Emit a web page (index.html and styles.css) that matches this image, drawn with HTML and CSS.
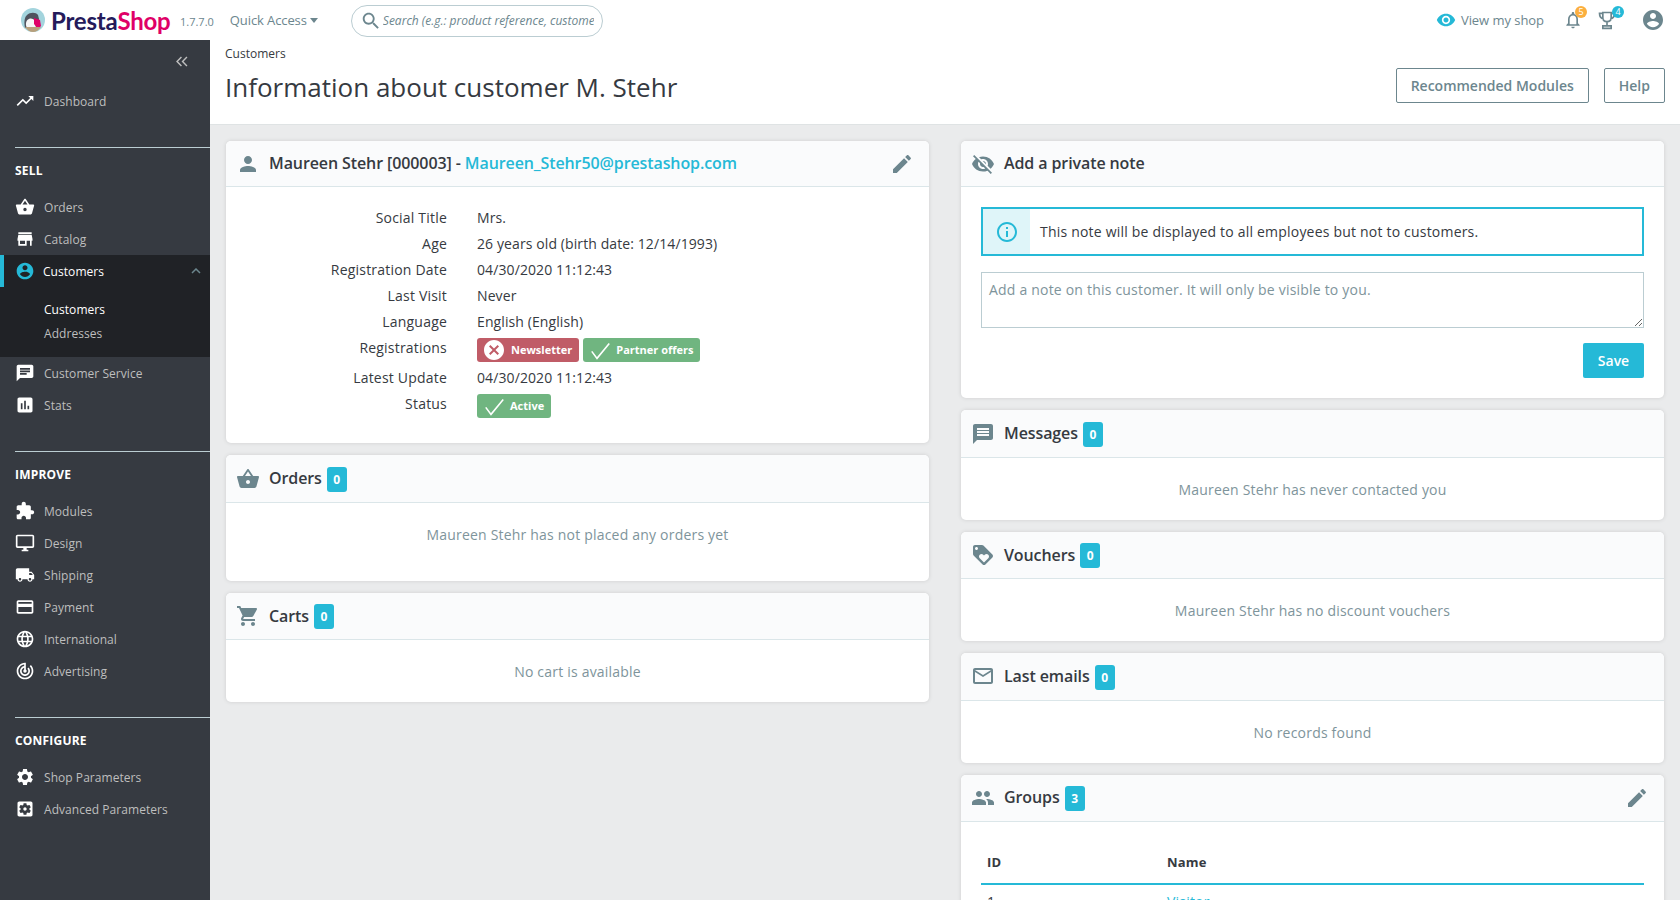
FILE: index.html
```html
<!DOCTYPE html>
<html lang="en">
<head>
    <meta charset="UTF-8">
    <title>Information about customer M. Stehr</title>
    <link rel="stylesheet" href="styles.css">
</head>
<body>
    <svg class="sprite" xmlns="http://www.w3.org/2000/svg">
        <symbol id="i-trending" viewBox="0 0 24 24"><path d="M16 6l2.29 2.29-4.88 4.88-4-4L2 16.59 3.41 18l6-6 4 4 6.3-6.29L22 12V6z"/></symbol>
        <symbol id="i-basket" viewBox="0 0 24 24"><path d="M17.21 9l-4.38-6.56c-.19-.28-.51-.42-.83-.42-.32 0-.64.14-.83.43L6.79 9H2c-.55 0-1 .45-1 1 0 .09.01.18.04.27l2.54 9.27c.23.84 1 1.46 1.92 1.46h13c.92 0 1.69-.62 1.93-1.46l2.54-9.27L23 10c0-.55-.45-1-1-1h-4.79zM9 9l3-4.4L15 9H9zm3 8c-1.1 0-2-.9-2-2s.9-2 2-2 2 .9 2 2-.9 2-2 2z"/></symbol>
        <symbol id="i-store" viewBox="0 0 24 24"><path d="M20 4H4v2h16V4zm1 10v-2l-1-5H4l-1 5v2h1v6h10v-6h4v6h2v-6h1zm-9 4H6v-4h6v4z"/></symbol>
        <symbol id="i-account" viewBox="0 0 24 24"><path d="M12 2C6.48 2 2 6.48 2 12s4.48 10 10 10 10-4.48 10-10S17.52 2 12 2zm0 3c1.66 0 3 1.34 3 3s-1.34 3-3 3-3-1.34-3-3 1.34-3 3-3zm0 14.2c-2.5 0-4.71-1.28-6-3.22.03-1.99 4-3.08 6-3.08 1.99 0 5.97 1.09 6 3.08-1.29 1.94-3.5 3.22-6 3.22z"/></symbol>
        <symbol id="i-chat" viewBox="0 0 24 24"><path d="M20 2H4c-1.1 0-1.99.9-1.99 2L2 22l4-4h14c1.1 0 2-.9 2-2V4c0-1.1-.9-2-2-2zM6 9h12v2H6V9zm8 5H6v-2h8v2zm4-6H6V6h12v2z"/></symbol>
        <symbol id="i-stats" viewBox="0 0 24 24"><path d="M19 3H5c-1.1 0-2 .9-2 2v14c0 1.1.9 2 2 2h14c1.1 0 2-.9 2-2V5c0-1.1-.9-2-2-2zM9 17H7v-7h2v7zm4 0h-2V7h2v10zm4 0h-2v-4h2v4z"/></symbol>
        <symbol id="i-extension" viewBox="0 0 24 24"><path d="M20.5 11H19V7c0-1.1-.9-2-2-2h-4V3.5C13 2.12 11.88 1 10.5 1S8 2.12 8 3.5V5H4c-1.1 0-1.99.9-1.99 2v3.8H3.5c1.49 0 2.7 1.21 2.7 2.7s-1.21 2.7-2.7 2.7H2V20c0 1.1.9 2 2 2h3.8v-1.5c0-1.49 1.21-2.7 2.7-2.7 1.49 0 2.7 1.21 2.7 2.7V22H17c1.1 0 2-.9 2-2v-4h1.5c1.38 0 2.5-1.12 2.5-2.5S21.88 11 20.5 11z"/></symbol>
        <symbol id="i-desktop" viewBox="0 0 24 24"><path d="M21 2H3c-1.1 0-2 .9-2 2v12c0 1.1.9 2 2 2h7v2H8v2h8v-2h-2v-2h7c1.1 0 2-.9 2-2V4c0-1.1-.9-2-2-2zm0 14H3V4h18v12z"/></symbol>
        <symbol id="i-shipping" viewBox="0 0 24 24"><path d="M20 8h-3V4H3c-1.1 0-2 .9-2 2v11h2c0 1.66 1.34 3 3 3s3-1.34 3-3h6c0 1.66 1.34 3 3 3s3-1.34 3-3h2v-5l-3-4zM6 18.5c-.83 0-1.5-.67-1.5-1.5s.67-1.5 1.5-1.5 1.5.67 1.5 1.5-.67 1.5-1.5 1.5zm13.5-9l1.96 2.5H17V9.5h2.5zm-1.5 9c-.83 0-1.5-.67-1.5-1.5s.67-1.5 1.5-1.5 1.5.67 1.5 1.5-.67 1.5-1.5 1.5z"/></symbol>
        <symbol id="i-payment" viewBox="0 0 24 24"><path d="M20 4H4c-1.11 0-1.99.89-1.99 2L2 18c0 1.11.89 2 2 2h16c1.11 0 2-.89 2-2V6c0-1.11-.89-2-2-2zm0 14H4v-6h16v6zm0-10H4V6h16v2z"/></symbol>
        <symbol id="i-language" viewBox="0 0 24 24"><path d="M11.99 2C6.47 2 2 6.48 2 12s4.47 10 9.99 10C17.52 22 22 17.52 22 12S17.52 2 11.99 2zm6.93 6h-2.95c-.32-1.25-.78-2.45-1.38-3.56 1.84.63 3.37 1.91 4.33 3.56zM12 4.04c.83 1.2 1.48 2.53 1.91 3.96h-3.82c.43-1.43 1.08-2.76 1.91-3.96zM4.26 14C4.1 13.36 4 12.69 4 12s.1-1.36.26-2h3.38c-.08.66-.14 1.32-.14 2 0 .68.06 1.34.14 2H4.26zm.82 2h2.95c.32 1.25.78 2.45 1.38 3.56-1.84-.63-3.37-1.9-4.33-3.56zm2.95-8H5.08c.96-1.66 2.49-2.93 4.33-3.56C8.81 5.55 8.35 6.75 8.03 8zM12 19.96c-.83-1.2-1.48-2.53-1.91-3.96h3.82c-.43 1.43-1.08 2.76-1.91 3.96zM14.34 14H9.66c-.09-.66-.16-1.32-.16-2 0-.68.07-1.35.16-2h4.68c.09.65.16 1.32.16 2 0 .68-.07 1.34-.16 2zm.25 5.56c.6-1.11 1.06-2.31 1.38-3.56h2.95c-.96 1.65-2.49 2.93-4.33 3.56zM16.36 14c.08-.66.14-1.32.14-2 0-.68-.06-1.34-.14-2h3.38c.16.64.26 1.31.26 2s-.1 1.36-.26 2h-3.38z"/></symbol>
        <symbol id="i-target" viewBox="0 0 24 24"><path d="M19.07 4.93l-1.41 1.41C19.1 7.79 20 9.79 20 12c0 4.42-3.58 8-8 8s-8-3.58-8-8c0-4.08 3.05-7.44 7-7.93v2.02C8.16 6.57 6 9.03 6 12c0 3.31 2.69 6 6 6s6-2.69 6-6c0-1.66-.67-3.16-1.76-4.24l-1.41 1.41C15.55 9.9 16 10.9 16 12c0 2.21-1.79 4-4 4s-4-1.79-4-4c0-1.86 1.28-3.41 3-3.86v2.14c-.6.35-1 .98-1 1.72 0 1.1.9 2 2 2s2-.9 2-2c0-.74-.4-1.38-1-1.72V2h-1C6.48 2 2 6.48 2 12s4.48 10 10 10 10-4.48 10-10c0-2.76-1.12-5.26-2.93-7.07z"/></symbol>
        <symbol id="i-settings" viewBox="0 0 24 24"><path d="M19.14 12.94c.04-.3.06-.61.06-.94 0-.32-.02-.64-.07-.94l2.03-1.58c.18-.14.23-.41.12-.61l-1.92-3.32c-.12-.22-.37-.29-.59-.22l-2.39.96c-.5-.38-1.03-.7-1.62-.94l-.36-2.54c-.04-.24-.24-.41-.48-.41h-3.84c-.24 0-.43.17-.47.41l-.36 2.54c-.59.24-1.13.57-1.62.94l-2.39-.96c-.22-.08-.47 0-.59.22L2.74 8.87c-.12.21-.08.47.12.61l2.03 1.58c-.05.3-.09.63-.09.94s.02.64.07.94l-2.03 1.58c-.18.14-.23.41-.12.61l1.92 3.32c.12.22.37.29.59.22l2.39-.96c.5.38 1.03.7 1.62.94l.36 2.54c.05.24.24.41.48.41h3.84c.24 0 .44-.17.47-.41l.36-2.54c.59-.24 1.13-.56 1.62-.94l2.39.96c.22.08.47 0 .59-.22l1.92-3.32c.12-.22.07-.47-.12-.61l-2.01-1.58zM12 15.6c-1.98 0-3.6-1.62-3.6-3.6s1.62-3.6 3.6-3.6 3.6 1.62 3.6 3.6-1.62 3.6-3.6 3.6z"/></symbol>
        <symbol id="i-settings-box" viewBox="0 0 24 24"><path d="M12 10c-1.1 0-2 .9-2 2s.9 2 2 2 2-.9 2-2-.9-2-2-2zm7-7H5c-1.11 0-2 .9-2 2v14c0 1.1.89 2 2 2h14c1.11 0 2-.9 2-2V5c0-1.1-.89-2-2-2zm-1.75 9c0 .23-.02.46-.05.68l1.48 1.16c.13.11.17.3.08.45l-1.4 2.42c-.09.15-.27.21-.43.15l-1.74-.7c-.36.28-.76.51-1.18.69l-.26 1.85c-.03.17-.18.3-.35.3h-2.8c-.17 0-.32-.13-.35-.29l-.26-1.85c-.43-.18-.82-.41-1.18-.69l-1.74.7c-.16.06-.34 0-.43-.15l-1.4-2.42c-.09-.15-.05-.34.08-.45l1.48-1.16c-.03-.23-.05-.46-.05-.69 0-.23.02-.46.05-.68l-1.48-1.16c-.13-.11-.17-.3-.08-.45l1.4-2.42c.09-.15.27-.21.43-.15l1.74.7c.36-.28.76-.51 1.18-.69l.26-1.85c.03-.17.18-.3.35-.3h2.8c.17 0 .32.13.35.29l.26 1.85c.43.18.82.41 1.18.69l1.74-.7c.16-.06.34 0 .43.15l1.4 2.42c.09.15.05.34-.08.45l-1.48 1.16c.03.23.05.46.05.69z"/></symbol>
        <symbol id="i-person" viewBox="0 0 24 24"><path d="M12 12c2.21 0 4-1.79 4-4s-1.79-4-4-4-4 1.79-4 4 1.79 4 4 4zm0 2c-2.67 0-8 1.34-8 4v2h16v-2c0-2.66-5.33-4-8-4z"/></symbol>
        <symbol id="i-edit" viewBox="0 0 24 24"><path d="M3 17.25V21h3.75L17.81 9.94l-3.75-3.75L3 17.25zM20.71 7.04c.39-.39.39-1.02 0-1.41l-2.34-2.34c-.39-.39-1.02-.39-1.41 0l-1.83 1.83 3.75 3.75 1.83-1.83z"/></symbol>
        <symbol id="i-eye" viewBox="0 0 24 24"><path d="M12 4.5C7 4.5 2.73 7.61 1 12c1.73 4.39 6 7.5 11 7.5s9.27-3.11 11-7.5c-1.73-4.39-6-7.5-11-7.5zM12 17c-2.76 0-5-2.24-5-5s2.24-5 5-5 5 2.24 5 5-2.24 5-5 5zm0-8c-1.66 0-3 1.34-3 3s1.34 3 3 3 3-1.34 3-3-1.34-3-3-3z"/></symbol>
        <symbol id="i-eye-off" viewBox="0 0 24 24"><path d="M12 7c2.76 0 5 2.24 5 5 0 .65-.13 1.26-.36 1.83l2.92 2.92c1.51-1.26 2.7-2.89 3.43-4.75-1.73-4.39-6-7.5-11-7.5-1.4 0-2.74.25-3.98.7l2.16 2.16C10.74 7.13 11.35 7 12 7zM2 4.27l2.28 2.28.46.46C3.08 8.3 1.78 10.02 1 12c1.73 4.39 6 7.5 11 7.5 1.55 0 3.03-.3 4.38-.84l.42.42L19.73 22 21 20.73 3.27 3 2 4.27zM7.53 9.8l1.55 1.55c-.05.21-.08.43-.08.65 0 1.66 1.34 3 3 3 .22 0 .44-.03.65-.08l1.55 1.55c-.67.33-1.41.53-2.2.53-2.76 0-5-2.24-5-5 0-.79.2-1.53.53-2.2zm4.31-.78l3.15 3.15.02-.16c0-1.66-1.34-3-3-3l-.17.01z"/></symbol>
        <symbol id="i-message" viewBox="0 0 24 24"><path d="M20 2H4c-1.1 0-1.99.9-1.99 2L2 22l4-4h14c1.1 0 2-.9 2-2V4c0-1.1-.9-2-2-2zm-2 12H6v-2h12v2zm0-3H6V9h12v2zm0-3H6V6h12v2z"/></symbol>
        <symbol id="i-loyalty" viewBox="0 0 24 24"><path d="M21.41 11.58l-9-9C12.05 2.22 11.55 2 11 2H4c-1.1 0-2 .9-2 2v7c0 .55.22 1.05.59 1.42l9 9c.36.36.86.58 1.41.58.55 0 1.05-.22 1.41-.59l7-7c.37-.36.59-.86.59-1.41 0-.55-.23-1.06-.59-1.42zM5.5 7C4.67 7 4 6.33 4 5.5S4.67 4 5.5 4 7 4.67 7 5.5 6.33 7 5.5 7zm11.77 8.27L13 19.54l-4.27-4.27C8.28 14.81 8 14.19 8 13.5c0-1.38 1.12-2.5 2.5-2.5.69 0 1.32.28 1.77.74l.73.72.73-.73c.45-.45 1.08-.73 1.77-.73 1.38 0 2.5 1.12 2.5 2.5 0 .69-.28 1.32-.73 1.77z"/></symbol>
        <symbol id="i-mail" viewBox="0 0 24 24"><path d="M20 4H4c-1.1 0-1.99.9-1.99 2L2 18c0 1.1.9 2 2 2h16c1.1 0 2-.9 2-2V6c0-1.1-.9-2-2-2zm0 14H4V8l8 5 8-5v10zm-8-7L4 6h16l-8 5z"/></symbol>
        <symbol id="i-group" viewBox="0 0 24 24"><path d="M16 11c1.66 0 2.99-1.34 2.99-3S17.66 5 16 5c-1.66 0-3 1.34-3 3s1.34 3 3 3zm-8 0c1.66 0 2.99-1.34 2.99-3S9.66 5 8 5C6.34 5 5 6.34 5 8s1.34 3 3 3zm0 2c-2.33 0-7 1.17-7 3.5V19h14v-2.5c0-2.33-4.67-3.5-7-3.5zm8 0c-.29 0-.62.02-.97.05 1.16.84 1.97 1.97 1.97 3.45V19h6v-2.5c0-2.33-4.67-3.5-7-3.5z"/></symbol>
        <symbol id="i-cart" viewBox="0 0 24 24"><path d="M7 18c-1.1 0-1.99.9-1.99 2S5.9 22 7 22s2-.9 2-2-.9-2-2-2zM1 2v2h2l3.6 7.59-1.35 2.45c-.16.28-.25.61-.25.96 0 1.1.9 2 2 2h12v-2H7.42c-.14 0-.25-.11-.25-.25l.03-.12.9-1.63h7.45c.75 0 1.41-.41 1.75-1.03l3.58-6.49c.08-.14.12-.31.12-.48 0-.55-.45-1-1-1H5.21l-.94-2H1zm16 16c-1.1 0-1.99.9-1.99 2s.89 2 1.99 2 2-.9 2-2-.9-2-2-2z"/></symbol>
        <symbol id="i-search" viewBox="0 0 24 24"><path d="M15.5 14h-.79l-.28-.27C15.41 12.59 16 11.11 16 9.5 16 5.91 13.09 3 9.5 3S3 5.91 3 9.5 5.91 16 9.5 16c1.61 0 3.09-.59 4.23-1.57l.27.28v.79l5 4.99L20.49 19l-4.99-5zm-6 0C7.01 14 5 11.99 5 9.5S7.01 5 9.5 5 14 7.01 14 9.5 11.99 14 9.5 14z"/></symbol>
        <symbol id="i-bell" viewBox="0 0 24 24"><path d="M12 22c1.1 0 2-.9 2-2h-4c0 1.1.9 2 2 2zm6-6v-5c0-3.07-1.63-5.64-4.5-6.32V4c0-.83-.67-1.5-1.5-1.5s-1.5.67-1.5 1.5v.68C7.64 5.36 6 7.92 6 11v5l-2 2v1h16v-1l-2-2zm-2 1H8v-6c0-2.48 1.51-4.5 4-4.5s4 2.02 4 4.5v6z"/></symbol>
        <symbol id="i-info" viewBox="0 0 24 24"><path d="M11 17h2v-6h-2v6zm1-15C6.48 2 2 6.48 2 12s4.48 10 10 10 10-4.48 10-10S17.52 2 12 2zm0 18c-4.41 0-8-3.59-8-8s3.59-8 8-8 8 3.59 8 8-3.59 8-8 8zM11 9h2V7h-2v2z"/></symbol>
        <symbol id="i-cancel" viewBox="0 0 24 24"><path d="M12 2C6.47 2 2 6.47 2 12s4.47 10 10 10 10-4.47 10-10S17.53 2 12 2zm5 13.59L15.59 17 12 13.41 8.41 17 7 15.59 10.59 12 7 8.41 8.41 7 12 10.59 15.59 7 17 8.41 13.41 12 17 15.59z"/></symbol>
        <symbol id="i-check" viewBox="0 0 24 24"><path d="M2 13l6 8L22 4" fill="none" stroke="currentColor" stroke-width="1.800"/></symbol>
        <symbol id="i-trophy" viewBox="0 0 24 24"><path d="M7 3h10v6c0 3-2 5-5 5s-5-2-5-5zM7 4H3c0 3 1 6 5 7M17 4h4c0 3-1 6-5 7M12 14v5M7 22v-3h10v3z" fill="none" stroke="currentColor" stroke-width="2"/></symbol>
    </svg>

    <header class="topbar">
        <a class="logo" href="#">
            <svg class="logo-bird" viewBox="0 0 24 24">
                <circle cx="12" cy="12" r="12" fill="#a3d4dd"/>
                <path d="M4 20c-1-5-1-10 2-13 3-3 9-3 11 0l1 4-2 9z" fill="#4f535e"/>
                <path d="M6 20c-2-4-1-8 2-9 2-1 5 0 6 2l1 7z" fill="#f6f6f6"/>
                <path d="M13 10l6 2 1 6-3 3-4-5z" fill="#df0067"/>
                <path d="M4 19h16c-2 3-5 5-8 5s-6-2-8-5z" fill="#b8a07c"/>
            </svg>
            <span class="logo-name">Presta<em>Shop</em></span>
        </a>
        <span class="version">1.7.7.0</span>
        <a class="quick-access" href="#">Quick Access <i class="caret"></i></a>
        <form class="search">
            <svg class="icon search-icon"><use href="#i-search"/></svg>
            <input type="text" placeholder="Search (e.g.: product reference, customer name…)">
        </form>
        <div class="topbar-right">
            <a class="view-shop" href="#"><svg class="icon"><use href="#i-eye"/></svg>View my shop</a>
            <a class="notif" href="#"><svg class="icon"><use href="#i-bell"/></svg><span class="notif-count orange">5</span></a>
            <a class="notif" href="#"><svg class="icon"><use href="#i-trophy"/></svg><span class="notif-count blue">4</span></a>
            <a class="avatar" href="#"><svg class="icon"><use href="#i-account"/></svg></a>
        </div>
    </header>

    <div class="layout">
        <nav class="sidebar">
            <div class="collapse-row">
                <svg class="collapse-icon" viewBox="0 0 12 10"><path d="M5.500 1L1.500 5l4 4M10.500 1l-4 4 4 4" fill="none" stroke="currentColor" stroke-width="1.300"/></svg>
            </div>
            <a class="nav-link" href="#"><svg class="icon"><use href="#i-trending"/></svg>Dashboard</a>

            <div class="nav-section">
                <h2>Sell</h2>
                <a class="nav-link" href="#"><svg class="icon"><use href="#i-basket"/></svg>Orders</a>
                <a class="nav-link" href="#"><svg class="icon"><use href="#i-store"/></svg>Catalog</a>
                <div class="nav-open">
                    <a class="nav-link active" href="#"><svg class="icon"><use href="#i-account"/></svg>Customers<svg class="chevron" viewBox="0 0 10 6"><path d="M1 5l4-4 4 4" fill="none" stroke="currentColor" stroke-width="1.500"/></svg></a>
                    <ul class="subnav">
                        <li class="current">Customers</li>
                        <li>Addresses</li>
                    </ul>
                </div>
                <a class="nav-link" href="#"><svg class="icon"><use href="#i-chat"/></svg>Customer Service</a>
                <a class="nav-link" href="#"><svg class="icon"><use href="#i-stats"/></svg>Stats</a>
            </div>

            <div class="nav-section">
                <h2>Improve</h2>
                <a class="nav-link" href="#"><svg class="icon"><use href="#i-extension"/></svg>Modules</a>
                <a class="nav-link" href="#"><svg class="icon"><use href="#i-desktop"/></svg>Design</a>
                <a class="nav-link" href="#"><svg class="icon"><use href="#i-shipping"/></svg>Shipping</a>
                <a class="nav-link" href="#"><svg class="icon"><use href="#i-payment"/></svg>Payment</a>
                <a class="nav-link" href="#"><svg class="icon"><use href="#i-language"/></svg>International</a>
                <a class="nav-link" href="#"><svg class="icon"><use href="#i-target"/></svg>Advertising</a>
            </div>

            <div class="nav-section">
                <h2>Configure</h2>
                <a class="nav-link" href="#"><svg class="icon"><use href="#i-settings"/></svg>Shop Parameters</a>
                <a class="nav-link" href="#"><svg class="icon"><use href="#i-settings-box"/></svg>Advanced Parameters</a>
            </div>
        </nav>

        <main class="main">
            <div class="page-head">
                <div class="page-titles">
                    <div class="breadcrumb">Customers</div>
                    <h1>Information about customer M. Stehr</h1>
                </div>
                <div class="head-buttons">
                    <a class="btn-outline" href="#">Recommended Modules</a>
                    <a class="btn-outline" href="#">Help</a>
                </div>
            </div>

            <div class="columns">
                <div class="column">
                    <section class="card">
                        <div class="card-header">
                            <svg class="icon"><use href="#i-person"/></svg>
                            <h3>Maureen Stehr [000003] - <a href="#">Maureen_Stehr50@prestashop.com</a></h3>
                            <svg class="icon edit"><use href="#i-edit"/></svg>
                        </div>
                        <div class="card-body customer-info">
                            <div class="info-label">Social Title</div><div class="info-value">Mrs.</div>
                            <div class="info-label">Age</div><div class="info-value">26 years old (birth date: 12/14/1993)</div>
                            <div class="info-label">Registration Date</div><div class="info-value">04/30/2020 11:12:43</div>
                            <div class="info-label">Last Visit</div><div class="info-value">Never</div>
                            <div class="info-label">Language</div><div class="info-value">English (English)</div>
                            <div class="info-label">Registrations</div>
                            <div class="info-value tags">
                                <span class="tag red"><svg class="x-icon"><use href="#i-cancel"/></svg>Newsletter</span>
                                <span class="tag green"><svg class="check-icon"><use href="#i-check"/></svg>Partner offers</span>
                            </div>
                            <div class="info-label">Latest Update</div><div class="info-value">04/30/2020 11:12:43</div>
                            <div class="info-label">Status</div>
                            <div class="info-value tags">
                                <span class="tag green"><svg class="check-icon"><use href="#i-check"/></svg>Active</span>
                            </div>
                        </div>
                    </section>

                    <section class="card">
                        <div class="card-header">
                            <svg class="icon"><use href="#i-basket"/></svg>
                            <h3>Orders</h3><span class="count">0</span>
                        </div>
                        <p class="empty orders-empty">Maureen Stehr has not placed any orders yet</p>
                    </section>

                    <section class="card">
                        <div class="card-header">
                            <svg class="icon"><use href="#i-cart"/></svg>
                            <h3>Carts</h3><span class="count">0</span>
                        </div>
                        <p class="empty">No cart is available</p>
                    </section>
                </div>

                <div class="column">
                    <section class="card">
                        <div class="card-header">
                            <svg class="icon"><use href="#i-eye-off"/></svg>
                            <h3>Add a private note</h3>
                        </div>
                        <div class="card-body note-body">
                            <div class="alert">
                                <div class="alert-icon"><svg class="icon"><use href="#i-info"/></svg></div>
                                <p>This note will be displayed to all employees but not to customers.</p>
                            </div>
                            <textarea placeholder="Add a note on this customer. It will only be visible to you."></textarea>
                            <div class="note-actions"><button type="button">Save</button></div>
                        </div>
                    </section>

                    <section class="card">
                        <div class="card-header">
                            <svg class="icon"><use href="#i-message"/></svg>
                            <h3>Messages</h3><span class="count">0</span>
                        </div>
                        <p class="empty">Maureen Stehr has never contacted you</p>
                    </section>

                    <section class="card">
                        <div class="card-header">
                            <svg class="icon"><use href="#i-loyalty"/></svg>
                            <h3>Vouchers</h3><span class="count">0</span>
                        </div>
                        <p class="empty">Maureen Stehr has no discount vouchers</p>
                    </section>

                    <section class="card">
                        <div class="card-header">
                            <svg class="icon"><use href="#i-mail"/></svg>
                            <h3>Last emails</h3><span class="count">0</span>
                        </div>
                        <p class="empty">No records found</p>
                    </section>

                    <section class="card">
                        <div class="card-header">
                            <svg class="icon"><use href="#i-group"/></svg>
                            <h3>Groups</h3><span class="count">3</span>
                            <svg class="icon edit"><use href="#i-edit"/></svg>
                        </div>
                        <div class="card-body groups-body">
                            <table>
                                <thead>
                                    <tr><th class="col-id">ID</th><th>Name</th></tr>
                                </thead>
                                <tbody>
                                    <tr><td>1</td><td><a href="#">Visitor</a></td></tr>
                                </tbody>
                            </table>
                        </div>
                    </section>
                </div>
            </div>
        </main>
    </div>
</body>
</html>
```

FILE: styles.css
```css
* {
    box-sizing: border-box;
}

html, body {
    height: 100%;
    overflow: hidden;
}

body {
    margin: 0;
    font-family: "Open Sans", sans-serif;
    font-size: 14px;
    letter-spacing: 0.2px;
    color: #363a41;
    background-color: #eaebec;
}

a {
    text-decoration: none;
    color: inherit;
}

.sprite {
    display: none;
}

.icon {
    width: 20px;
    height: 20px;
    fill: currentColor;
    flex: none;
}

/* top bar */
.topbar {
    height: 40px;
    background-color: #fff;
    display: flex;
    align-items: center;
    padding-left: 21px;
    padding-right: 15px;
}

.logo {
    display: flex;
    align-items: center;
    gap: 6px;
    width: 159px;
}

.logo-bird {
    width: 24px;
    height: 24px;
    flex: none;
}

.logo-name {
    font-family: "Lato", sans-serif;
    font-size: 24px;
    font-weight: 700;
    letter-spacing: -0.2px;
    color: #251b5b;
}

.logo-name em {
    font-style: normal;
    color: #df0067;
}

.version {
    font-size: 11px;
    letter-spacing: 0;
    color: #6c868e;
    margin-top: 3px;
}

.quick-access {
    font-size: 13px;
    letter-spacing: -0.1px;
    color: #6c868e;
    margin-left: 16px;
    width: 121px;
}

.caret {
    display: inline-block;
    border-top: 5px solid #6c868e;
    border-left: 4px solid transparent;
    border-right: 4px solid transparent;
    vertical-align: 2px;
}

.search {
    width: 252px;
    height: 32px;
    margin-top: 1px;
    border: 1px solid #bbcdd2;
    border-radius: 16px;
    display: flex;
    align-items: center;
    padding: 0 8px;
}

.search-icon {
    color: #6c868e;
    width: 22px;
    height: 22px;
}

.search input {
    border: none;
    outline: none;
    padding: 0;
    margin-left: 1px;
    width: 100%;
    font-family: inherit;
    font-size: 12px;
    font-style: italic;
}

.search input::placeholder {
    color: #6c868e;
    opacity: 1;
}

.topbar-right {
    margin-left: auto;
    display: flex;
    align-items: center;
    color: #6c868e;
}

.view-shop {
    display: flex;
    align-items: center;
    gap: 5px;
    font-size: 13px;
    letter-spacing: -0.05px;
    margin-right: 19px;
}

.view-shop .icon {
    color: #25b9d7;
}

.notif {
    position: relative;
    display: flex;
    margin-right: 14px;
}

.notif-count {
    position: absolute;
    top: -4px;
    right: -4px;
    width: 12px;
    height: 12px;
    border-radius: 50%;
    font-size: 9px;
    letter-spacing: 0;
    line-height: 12px;
    text-align: center;
    color: #fff;
}

.notif-count.orange {
    background-color: #fbaf3f;
}

.notif-count.blue {
    background-color: #25b9d7;
    right: -7px;
}

.avatar {
    display: flex;
    margin-left: 10px;
}

.avatar .icon {
    width: 24px;
    height: 24px;
}

/* layout */
.layout {
    display: flex;
    height: calc(100vh - 40px);
}

.sidebar {
    width: 210px;
    flex: none;
    background-color: #363a41;
    color: #bebebe;
    font-size: 12px;
    letter-spacing: 0.05px;
}

.collapse-row {
    height: 45px;
    display: flex;
    justify-content: flex-end;
    padding: 16px 21px 0 0;
}

.collapse-icon {
    width: 14px;
    height: 11px;
}

.nav-link {
    height: 32px;
    display: flex;
    align-items: center;
    gap: 9px;
    padding-left: 15px;
}

.nav-link .icon {
    color: #fff;
}

.nav-section {
    margin-top: 30px;
}

.nav-section h2 {
    margin: 0 0 0 15px;
    height: 44px;
    line-height: 46px;
    border-top: 1px solid #bbcdd2;
    font-size: 12px;
    font-weight: 700;
    letter-spacing: 0.2px;
    color: #fff;
    text-transform: uppercase;
}

.nav-open {
    background-color: #202226;
}

.nav-link.active {
    color: #fff;
    border-left: 4px solid #25b9d7;
    padding-left: 11px;
    gap: 8px;
}

.nav-link.active .icon {
    color: #25b9d7;
}

.chevron {
    width: 10px;
    height: 6px;
    margin-left: auto;
    margin-right: 9px;
    color: #6c868e;
}

.subnav {
    list-style: none;
    margin: 0;
    padding: 11px 0 11px 44px;
}

.subnav li {
    height: 24px;
    line-height: 24px;
}

.subnav .current {
    color: #fff;
}

/* main area */
.main {
    flex: 1;
    min-width: 0;
}

.page-head {
    height: 85px;
    background-color: #fff;
    border-bottom: 1px solid #dfe3e4;
    display: flex;
    justify-content: space-between;
    padding: 5px 15px 0 15px;
}

.breadcrumb {
    font-size: 12px;
    letter-spacing: 0;
    line-height: 18px;
}

h1 {
    margin: 5px 0 0;
    font-size: 26px;
    font-weight: 400;
    letter-spacing: 0;
    line-height: 39px;
}

.head-buttons {
    display: flex;
    gap: 15px;
    padding-top: 23px;
}

.btn-outline {
    height: 35px;
    line-height: 33px;
    padding: 0 14px;
    border: 1px solid #6c868e;
    border-radius: 2px;
    font-weight: 600;
    letter-spacing: 0;
    color: #6c868e;
}

.columns {
    display: grid;
    grid-template-columns: 703px 703px;
    gap: 32px;
    padding: 16px 0 0 16px;
}

.column {
    display: flex;
    flex-direction: column;
    gap: 12px;
}

/* cards */
.card {
    background-color: #fff;
    border-radius: 5px;
    box-shadow: 0 0 4px rgba(0, 0, 0, 0.12);
}

.card-header {
    background-color: #fafbfc;
    border-bottom: 1px solid #dbe6e9;
    border-radius: 5px 5px 0 0;
    display: flex;
    align-items: center;
    padding: 10.7px 15px 10.7px 10px;
    color: #6c868e;
}

.card-header .icon {
    width: 24px;
    height: 24px;
    margin-right: 9px;
}

.card-header h3 {
    margin: 0;
    font-size: 16px;
    font-weight: 600;
    letter-spacing: -0.1px;
    line-height: 22.400px;
    color: #363a41;
}

.card-header h3 a {
    color: #25b9d7;
}

.card-header .icon.edit {
    margin: 0 0 0 auto;
}

.count {
    margin: 1px 0 -1px 5px;
    width: 20px;
    height: 25px;
    line-height: 25px;
    border-radius: 3px;
    background-color: #25b9d7;
    color: #fff;
    font-size: 12px;
    font-weight: 700;
    letter-spacing: 0;
    text-align: center;
}

.empty {
    margin: 0;
    padding: 21px 16px 20px;
    line-height: 21px;
    text-align: center;
    color: #7e949b;
}

.orders-empty {
    padding-bottom: 36px;
}

/* customer details */
.customer-info {
    display: grid;
    grid-template-columns: 221px 1fr;
    column-gap: 30px;
    padding-top: 18px;
    padding-bottom: 22px;
}

.info-label,
.info-value {
    line-height: 26px;
}

.info-label {
    text-align: right;
    color: #363a41;
}

.info-value {
    letter-spacing: 0.1px;
}

.tags {
    display: flex;
    gap: 4px;
    padding: 3px 0;
}

.tag {
    height: 24px;
    display: flex;
    align-items: center;
    gap: 5px;
    padding: 0 7px;
    border-radius: 3px;
    color: #fff;
    font-size: 11px;
    font-weight: 700;
    letter-spacing: 0;
}

.tag.red {
    background-color: #c05c67;
}

.tag.green {
    background-color: #70b580;
}

.x-icon {
    width: 24px;
    height: 24px;
    fill: #fff;
    margin-left: -2px;
}

.check-icon {
    width: 21px;
    height: 21px;
    color: #fff;
    fill: none;
}

/* private note */
.note-body {
    padding: 20px;
}

.alert {
    height: 49px;
    border: 2px solid #25b9d7;
    display: flex;
    align-items: center;
}

.alert-icon {
    width: 47px;
    height: 100%;
    background-color: #dff5f9;
    color: #25b9d7;
    display: flex;
    align-items: center;
    justify-content: center;
}

.alert-icon .icon {
    width: 24px;
    height: 24px;
}

.alert p {
    margin: 0 0 0 10px;
}

textarea {
    display: block;
    width: 100%;
    height: 56px;
    margin-top: 16px;
    padding: 7px;
    border: 1px solid #bbcdd2;
    font-family: inherit;
    font-size: 14px;
    letter-spacing: 0.2px;
}

textarea::placeholder {
    color: #7e949b;
    opacity: 1;
}

.note-actions {
    display: flex;
    justify-content: flex-end;
    margin-top: 15px;
}

.note-actions button {
    width: 61px;
    height: 35px;
    border: none;
    border-radius: 2px;
    background-color: #25b9d7;
    color: #fff;
    font-family: inherit;
    font-size: 14px;
    font-weight: 600;
}

/* groups */
.groups-body {
    padding: 23px 20px 0;
}

table {
    width: 100%;
    border-collapse: collapse;
}

th {
    height: 39px;
    text-align: left;
    padding: 0 6px 4px;
    font-size: 13px;
    font-weight: 700;
    border-bottom: 2px solid #25b9d7;
}

.col-id {
    width: 180px;
}

td {
    height: 34px;
    padding: 0 6px;
}

td a {
    color: #25b9d7;
}
```
